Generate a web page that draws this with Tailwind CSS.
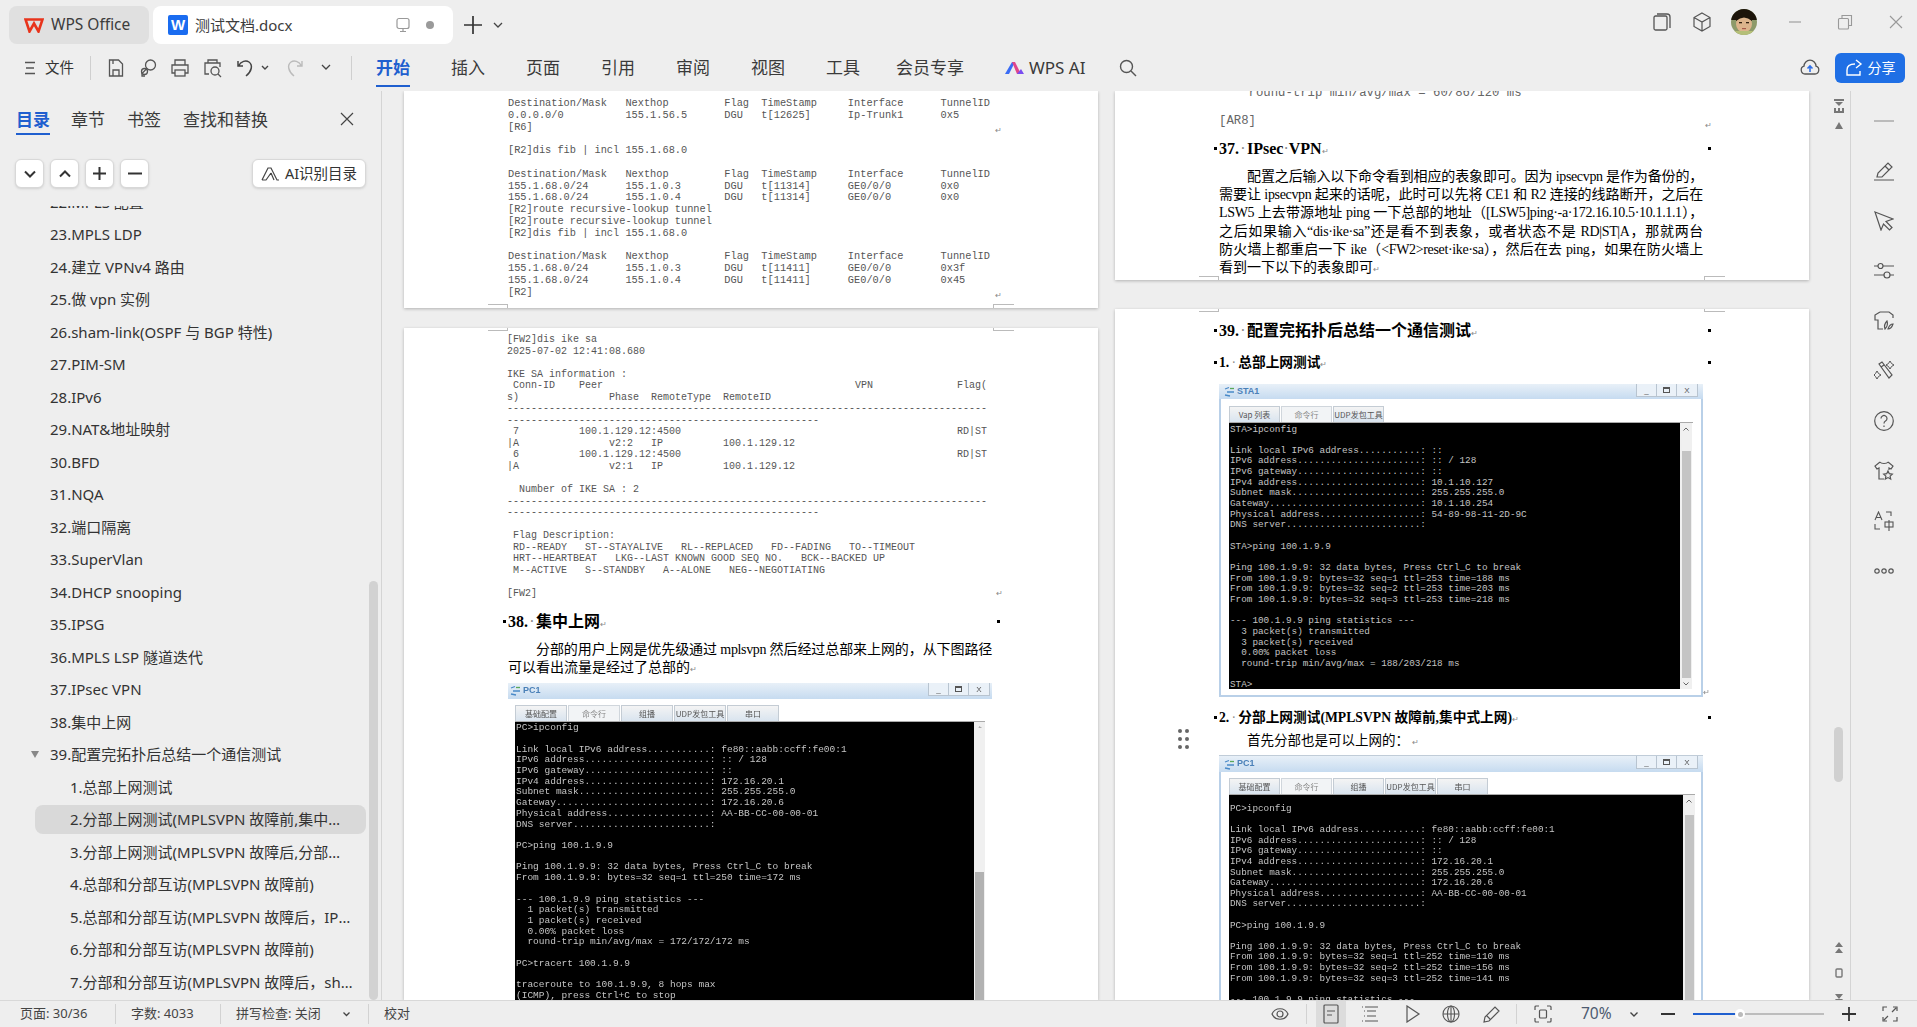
<!DOCTYPE html>
<html lang="zh">
<head>
<meta charset="UTF-8">
<title>测试文档.docx</title>
<script src="https://cdn.jsdelivr.net/npm/@tailwindcss/browser@4"></script>
</head>
<body class="h-screen w-screen overflow-hidden bg-[#eeeeee] text-[#333] font-['Noto_Sans','Noto_Sans_CJK_SC',sans-serif]">
<div class="flex h-[1027px] w-[1917px] flex-col">

  <!-- title bar -->
  <div class="flex h-[44px] shrink-0 items-end pr-[13px]">
    <div class="ml-[9px] flex h-[38px] w-[140px] items-center rounded-lg bg-[#e0e0e0] pl-[15px]">
      <svg class="h-[15px] w-[20px]" viewBox="0 0 20 15" fill="none" stroke="#e8341c" stroke-width="2.6" stroke-linejoin="miter"><path d="M1.5 1.5h17l-4 12-4.5-8-4.5 8z"/></svg>
      <span class="ml-[7px] whitespace-nowrap text-[15.500px] text-[#3c3c3c]">WPS Office</span>
    </div>
    <div class="ml-[4px] flex h-[38px] w-[300px] items-center rounded-t-lg rounded-b-lg bg-white pl-[15px]">
      <span class="flex h-[20px] w-[20px] items-center justify-center rounded-[2px] bg-[#1a6cf0] font-['Liberation_Sans'] text-[15px] font-bold text-white">W</span>
      <span class="ml-[7px] text-[15px] text-[#3c3c3c]">测试文档.docx</span>
      <svg class="ml-[103px] h-[16px] w-[16px]" viewBox="0 0 16 16" fill="none" stroke="#999" stroke-width="1.2"><rect x="2" y="1.5" width="12" height="10" rx="2"/><path d="M8 11.5v3M5 14.5h6"/></svg>
      <span class="ml-[15px] h-[8px] w-[8px] rounded-full bg-[#9a9a9a]"></span>
    </div>
    <div class="mb-[10px] ml-[11px] flex items-center">
      <svg class="h-[18px] w-[18px]" viewBox="0 0 18 18" stroke="#333" stroke-width="1.7"><path d="M9 0v18M0 9h18"/></svg>
      <svg class="ml-[11px] h-[8px] w-[10px]" viewBox="0 0 10 8" fill="none" stroke="#444" stroke-width="1.3"><path d="M1 2l4 4 4-4"/></svg>
    </div>
    <div class="flex-1"></div>
    <div class="mb-[9px] flex items-center">
      <svg class="h-[20px] w-[20px]" viewBox="0 0 20 20" fill="none" stroke="#555" stroke-width="1.3"><rect x="2" y="4" width="13" height="14" rx="1.5"/><path d="M5 2h10a3 3 0 0 1 3 3v11"/></svg>
      <svg class="ml-[20px] h-[20px] w-[20px]" viewBox="0 0 20 20" fill="none" stroke="#555" stroke-width="1.2"><path d="M10 1l8 4.5v9L10 19l-8-4.500v-9zM2 5.500l8 4.500 8-4.500M10 10v9"/></svg>
      <svg class="ml-[19px] h-[26px] w-[26px]" viewBox="0 0 26 26"><defs><clipPath id="av"><ellipse cx="13" cy="13" rx="13" ry="13"/></clipPath></defs><g clip-path="url(#av)"><rect width="26" height="26" fill="#8d9a6a"/><rect width="26" height="11" fill="#1c140a"/><ellipse cx="13" cy="15" rx="8" ry="8.500" fill="#dcb48c"/><path d="M5 12q8-7 16 0v-6H5z" fill="#1c140a"/><rect x="8" y="13" width="3" height="1.300" fill="#30200f"/><rect x="15" y="13" width="3" height="1.300" fill="#30200f"/><rect x="11" y="19" width="4" height="1.200" fill="#a85a4a"/><rect y="22" width="26" height="4" fill="#b5bf78"/></g></svg>
      <svg class="ml-[30px] h-[16px] w-[16px]" viewBox="0 0 16 16" stroke="#999" stroke-width="1.100"><path d="M2 8h12"/></svg>
      <svg class="ml-[34px] h-[16px] w-[16px]" viewBox="0 0 16 16" fill="none" stroke="#999" stroke-width="1.100"><rect x="1.500" y="4.500" width="10" height="10.500" rx="1"/><path d="M5 4.500V1.500h9.500v10h-3"/></svg>
      <svg class="ml-[35px] h-[16px] w-[16px]" viewBox="0 0 16 16" stroke="#999" stroke-width="1.100"><path d="M2 2l12 12M14 2L2 14"/></svg>
    </div>
  </div>

  <!-- ribbon -->
  <div class="flex h-[47px] shrink-0 items-center pr-[12px]">
    <svg class="ml-[25px] h-[14px] w-[10px]" viewBox="0 0 10 14" stroke="#555" stroke-width="1.300"><path d="M0 1.500h10M1 7h8M0 12.500h10"/></svg>
    <span class="ml-[10px] w-[30px] text-[14.500px] text-[#333]">文件</span>
    <span class="ml-[15px] h-[24px] w-px bg-[#cfcfcf]"></span>
    <svg class="ml-[15px] h-[20px] w-[20px]" viewBox="0 0 20 20" fill="none" stroke="#555" stroke-width="1.300"><path d="M3.500 2h9l4 4v12h-13zM7 18v-6h6v6M7 2v4"/></svg>
    <svg class="ml-[12px] h-[20px] w-[20px]" viewBox="0 0 20 20" fill="none" stroke="#555" stroke-width="1.300"><circle cx="12.500" cy="7" r="5"/><path d="M8.800 10.500L4 15.500v2.500h3"/><circle cx="6.500" cy="13.500" r="3" /></svg>
    <svg class="ml-[12px] h-[20px] w-[20px]" viewBox="0 0 20 20" fill="none" stroke="#555" stroke-width="1.300"><path d="M5 7V2h10v5M5 15H2V7h16v8h-3"/><rect x="5" y="12" width="10" height="6"/></svg>
    <svg class="ml-[13px] h-[20px] w-[20px]" viewBox="0 0 20 20" fill="none" stroke="#555" stroke-width="1.300"><path d="M5 5V2h9v3M6 16H2V5h15v4"/><circle cx="12" cy="13" r="4"/><path d="M15 16l3 3"/></svg>
    <svg class="ml-[13px] h-[20px] w-[20px]" viewBox="0 0 20 20" fill="none" stroke="#444" stroke-width="1.500"><path d="M2 3v5h5M2.500 8C5 3 10 2 13 4c4 3 3 9-3 14"/></svg>
    <svg class="ml-[5px] h-[6px] w-[8px]" viewBox="0 0 8 6" fill="none" stroke="#444" stroke-width="1.400"><path d="M1 1l3 3 3-3"/></svg>
    <svg class="ml-[15px] h-[20px] w-[20px]" viewBox="0 0 20 20" fill="none" stroke="#bbb" stroke-width="1.400"><path d="M18 3v5h-5M17.500 8C15 3 10 2 7 4c-4 3-3 9 3 14"/></svg>
    <svg class="ml-[17px] h-[7px] w-[10px]" viewBox="0 0 10 7" fill="none" stroke="#444" stroke-width="1.300"><path d="M1 1l4 4 4-4"/></svg>
    <span class="ml-[20px] h-[24px] w-px bg-[#cfcfcf]"></span>
    <div class="ml-[24px] flex h-full items-center gap-[41px] pt-[1px] text-[17px] text-[#3a3a3a]">
      <span class="relative font-bold text-[#1f5fcf]">开始<span class="absolute -bottom-[6px] left-0 h-[2px] w-full bg-[#1f5fcf]"></span></span>
      <span>插入</span><span>页面</span><span>引用</span><span>审阅</span><span>视图</span><span>工具</span><span class="-ml-[5px]">会员专享</span>
      <span class="flex items-center">
        <svg class="h-[14px] w-[19px]" viewBox="0 0 19 14"><path d="M0 13L7 1h3L4 13z" fill="#3a6cf5"/><path d="M7 1h3l6 12h-4z" fill="#e0468c"/><path d="M12 13l4-5 3 5z" fill="#7a4df0"/></svg>
        <span class="ml-[5px] whitespace-nowrap">WPS AI</span>
      </span>
    </div>
    <svg class="ml-[34px] h-[18px] w-[18px]" viewBox="0 0 18 18" fill="none" stroke="#555" stroke-width="1.400"><circle cx="7.500" cy="7.500" r="6"/><path d="M12 12l5 5"/></svg>
    <div class="flex-1"></div>
    <svg class="h-[20px] w-[20px]" viewBox="0 0 20 20" fill="none" stroke="#555" stroke-width="1.300"><path d="M5 16a4 4 0 0 1-1-7.800 6 6 0 0 1 12 0A4 4 0 0 1 15 16z"/><path d="M10 14V8M7.500 10.500L10 8l2.500 2.500" stroke="#2f6fe8" stroke-width="1.600"/></svg>
    <button class="ml-[15px] flex h-[30px] w-[70px] items-center justify-center gap-[5px] rounded-md bg-[#1f6fe5] text-[14px] text-white">
      <svg class="h-[18px] w-[18px]" viewBox="0 0 18 18" fill="none" stroke="#fff" stroke-width="1.400"><path d="M10 5c-5 0-8 2-8 6v5h13v-4M11 1l5 4-5 4"/></svg>分享
    </button>
  </div>

  <!-- body -->
  <div class="flex min-h-0 flex-1">

    <!-- outline panel -->
    <aside class="relative flex w-[382px] shrink-0 flex-col border-r border-[#d4d4d4]">
      <div class="flex h-[45px] shrink-0 pl-[16px] pt-[17px] text-[17px] text-[#3a3a3a]">
        <span class="relative h-[26px] w-[34px] font-bold leading-[24px] text-[#1f5fcf]">目录<span class="absolute bottom-[-1px] left-0 h-[2px] w-full bg-[#1f5fcf]"></span></span>
        <span class="ml-[21px] leading-[24px]">章节</span>
        <span class="ml-[22px] leading-[24px]">书签</span>
        <span class="ml-[22px] leading-[24px]">查找和替换</span>
        <svg class="ml-[72px] mt-[4px] h-[14px] w-[14px]" viewBox="0 0 14 14" stroke="#444" stroke-width="1.200"><path d="M1 1l12 12M13 1L1 13"/></svg>
      </div>
      <div class="mt-[23px] flex h-[29px] shrink-0 pl-[15px]">
        <button class="flex h-[29px] w-[29px] items-center justify-center rounded-md border border-[#d8d8d8] bg-white shadow-sm"><svg class="h-[8px] w-[12px]" viewBox="0 0 12 8" fill="none" stroke="#333" stroke-width="2"><path d="M1 1.500l5 5 5-5"/></svg></button>
        <button class="ml-[6px] flex h-[29px] w-[29px] items-center justify-center rounded-md border border-[#d8d8d8] bg-white shadow-sm"><svg class="h-[8px] w-[12px]" viewBox="0 0 12 8" fill="none" stroke="#333" stroke-width="2"><path d="M1 6.500l5-5 5 5"/></svg></button>
        <button class="ml-[6px] flex h-[29px] w-[29px] items-center justify-center rounded-md border border-[#d8d8d8] bg-white shadow-sm"><svg class="h-[13px] w-[13px]" viewBox="0 0 13 13" stroke="#333" stroke-width="2"><path d="M6.500 0v13M0 6.500h13"/></svg></button>
        <button class="ml-[6px] flex h-[29px] w-[29px] items-center justify-center rounded-md border border-[#d8d8d8] bg-white shadow-sm"><svg class="h-[13px] w-[14px]" viewBox="0 0 14 13" stroke="#333" stroke-width="2"><path d="M0 6.500h14"/></svg></button>
        <button class="ml-[103px] flex h-[29px] w-[114px] items-center justify-center gap-[5px] rounded-md border border-[#d8d8d8] bg-white text-[14.500px] text-[#333] shadow-sm">
          <svg class="h-[14px] w-[19px]" viewBox="0 0 19 14" fill="none" stroke="#444" stroke-width="1.200"><path d="M1 13L7 1h3l6 12h2M1 13h4l5-7M10 6l3 7"/></svg>AI识别目录
        </button>
      </div>
      <div class="mt-[18px] min-h-0 flex-1 overflow-hidden text-[15px] text-[#333]">
        <div class="-mt-[20.250px]">
          <div class="flex h-[32.500px] items-center pl-[50px]">22.MPLS 配置</div>
          <div class="flex h-[32.500px] items-center pl-[50px]">23.MPLS LDP</div>
          <div class="flex h-[32.500px] items-center pl-[50px]">24.建立 VPNv4 路由</div>
          <div class="flex h-[32.500px] items-center pl-[50px]">25.做 vpn 实例</div>
          <div class="flex h-[32.500px] items-center pl-[50px]">26.sham-link(OSPF 与 BGP 特性)</div>
          <div class="flex h-[32.500px] items-center pl-[50px]">27.PIM-SM</div>
          <div class="flex h-[32.500px] items-center pl-[50px]">28.IPv6</div>
          <div class="flex h-[32.500px] items-center pl-[50px]">29.NAT&amp;地址映射</div>
          <div class="flex h-[32.500px] items-center pl-[50px]">30.BFD</div>
          <div class="flex h-[32.500px] items-center pl-[50px]">31.NQA</div>
          <div class="flex h-[32.500px] items-center pl-[50px]">32.端口隔离</div>
          <div class="flex h-[32.500px] items-center pl-[50px]">33.SuperVlan</div>
          <div class="flex h-[32.500px] items-center pl-[50px]">34.DHCP snooping</div>
          <div class="flex h-[32.500px] items-center pl-[50px]">35.IPSG</div>
          <div class="flex h-[32.500px] items-center pl-[50px]">36.MPLS LSP 隧道迭代</div>
          <div class="flex h-[32.500px] items-center pl-[50px]">37.IPsec VPN</div>
          <div class="flex h-[32.500px] items-center pl-[50px]">38.集中上网</div>
          <div class="flex h-[32.500px] items-center pl-[31px]"><svg class="mr-[11px] h-[7px] w-[8px]" viewBox="0 0 8 7" fill="#888"><path d="M0 0h8L4 7z"/></svg>39.配置完拓扑后总结一个通信测试</div>
          <div class="flex h-[32.500px] items-center pl-[70px]">1.总部上网测试</div>
          <div class="flex h-[32.500px] items-center pl-[35px] pr-[15px]"><div class="flex h-[29px] w-full items-center rounded-lg bg-[#d9d9d9] pl-[35px]"><span class="block w-[282px] truncate">2.分部上网测试(MPLSVPN 故障前,集中式上网)</span></div></div>
          <div class="flex h-[32.500px] items-center pl-[70px]"><span class="block w-[282px] truncate">3.分部上网测试(MPLSVPN 故障后,分部上网)</span></div>
          <div class="flex h-[32.500px] items-center pl-[70px]">4.总部和分部互访(MPLSVPN 故障前)</div>
          <div class="flex h-[32.500px] items-center pl-[70px]"><span class="block w-[284px] truncate">5.总部和分部互访(MPLSVPN 故障后，IPsec VPN)</span></div>
          <div class="flex h-[32.500px] items-center pl-[70px]">6.分部和分部互访(MPLSVPN 故障前)</div>
          <div class="flex h-[32.500px] items-center pl-[70px]"><span class="block w-[290px] truncate">7.分部和分部互访(MPLSVPN 故障后，sham-link)</span></div>
        </div>
      </div>
      <div class="absolute bottom-0 right-[3px] top-[490px] w-[9px] rounded-full bg-[#d2d2d2]"></div>
    </aside>

    <!-- document -->
    <main class="relative flex min-w-0 flex-1 gap-[17px] overflow-hidden pl-[22px] font-['Liberation_Serif','Noto_Sans_CJK_SC',serif] text-black">

      <!-- left column -->
      <div class="flex w-[694px] shrink-0 flex-col gap-[20px]">
        <section class="relative h-[217px] shrink-0 bg-white pl-[104px] pt-[7px] shadow-[0_1px_3px_rgba(0,0,0,0.25)]">
<pre class="font-['Liberation_Mono'] text-[10.300px] leading-[11.800px] text-[#555]">Destination/Mask   Nexthop         Flag  TimeStamp     Interface      TunnelID
0.0.0.0/0          155.1.56.5      DGU   t[12625]      Ip-Trunk1      0x5
[R6]

[R2]dis fib | incl 155.1.68.0

Destination/Mask   Nexthop         Flag  TimeStamp     Interface      TunnelID
155.1.68.0/24      155.1.0.3       DGU   t[11314]      GE0/0/0        0x0
155.1.68.0/24      155.1.0.4       DGU   t[11314]      GE0/0/0        0x0
[R2]route recursive-lookup tunnel
[R2]route recursive-lookup tunnel
[R2]dis fib | incl 155.1.68.0

Destination/Mask   Nexthop         Flag  TimeStamp     Interface      TunnelID
155.1.68.0/24      155.1.0.3       DGU   t[11411]      GE0/0/0        0x3f
155.1.68.0/24      155.1.0.4       DGU   t[11411]      GE0/0/0        0x45
[R2]</pre>
          <span class="absolute left-[591px] top-[34px] font-['Liberation_Sans'] text-[8px] text-[#888]">↵</span>
          <span class="absolute left-[591px] top-[199px] font-['Liberation_Sans'] text-[8px] text-[#888]">↵</span>
          <span class="absolute bottom-0 left-[84px] h-[4px] w-[20px] border-r border-t border-[#bbb]"></span>
          <span class="absolute bottom-0 left-[589px] h-[4px] w-[21px] border-l border-t border-[#bbb]"></span>
        </section>
        <section class="relative min-h-0 flex-1 overflow-hidden bg-white pl-[104px] pr-[106px] pt-[6px] shadow-[0_1px_3px_rgba(0,0,0,0.25)]">
          <span class="absolute left-[84px] top-0 h-[3px] w-[20px] border-b border-r border-[#bbb]"></span>
          <span class="absolute left-[589px] top-0 h-[3px] w-[21px] border-b border-l border-[#bbb]"></span>
<pre class="-ml-px font-['Liberation_Mono'] text-[10px] leading-[11.550px] text-[#555]">[FW2]dis ike sa
2025-07-02 12:41:08.680

IKE SA information :
 Conn-ID    Peer                                          VPN              Flag(
s)               Phase  RemoteType  RemoteID
--------------------------------------------------------------------------------
----------------------------------------------------
 7          100.1.129.12:4500                                              RD|ST
|A               v2:2   IP          100.1.129.12
 6          100.1.129.12:4500                                              RD|ST
|A               v2:1   IP          100.1.129.12

  Number of IKE SA : 2
--------------------------------------------------------------------------------
----------------------------------------------------

 Flag Description:
 RD--READY   ST--STAYALIVE   RL--REPLACED   FD--FADING   TO--TIMEOUT
 HRT--HEARTBEAT   LKG--LAST KNOWN GOOD SEQ NO.   BCK--BACKED UP
 M--ACTIVE   S--STANDBY   A--ALONE   NEG--NEGOTIATING

[FW2]</pre>
          <span class="absolute left-[592px] top-[260px] font-['Liberation_Sans'] text-[8px] text-[#888]">↵</span>
          <div class="relative mt-[11px] h-[22px] text-[16px] font-bold leading-[22px]">
            <span class="absolute -left-[5px] top-[9px] h-[3px] w-[3px] bg-black"></span>
            <span class="absolute left-[489px] top-[9px] h-[3px] w-[3px] bg-black"></span>
            38.<span class="inline-block w-[8px] text-center font-normal text-[#888]">·</span>集中上网<span class="font-['Liberation_Sans'] text-[8px] font-normal text-[#888]">↵</span>
          </div>
          <div class="mt-[8px] text-[14px] leading-[18px]">
            <div class="pl-[28px] tracking-[-0.350px] [text-align-last:justify]">分部的用户上网是优先级通过 mplsvpn 然后经过总部来上网的，从下图路径</div>
            <div>可以看出流量是经过了总部的<span class="font-['Liberation_Sans'] text-[8px] text-[#888]">↵</span></div>
          </div>
          <div class="mt-[4px] blur-[0.3px]">
            <div class="flex h-[16px] items-center bg-gradient-to-b from-[#e8f0f8] to-[#c6dbf0] pl-[2px] pr-[2px]">
              <svg class="h-[11px] w-[11px]" viewBox="0 0 11 11" fill="none" stroke-width="1.300"><path d="M1 3l4-1.500M3 6h7M1 9l5 1" stroke="#4a8ac8"/><path d="M6 2.500h4" stroke="#5aa85a"/></svg>
              <span class="ml-[2px] font-['Liberation_Sans'] text-[9px] font-bold text-[#4a80b8]">PC1</span>
              <div class="ml-auto flex h-[13px] self-start border-x border-b border-[#b8c4d0] bg-[#eaf1f8] font-['Liberation_Sans'] text-[8px] leading-[13px] text-[#555]">
                <span class="w-[20px] border-r border-[#b8c4d0] text-center">_</span><span class="flex w-[20px] items-center justify-center border-r border-[#b8c4d0]"><span class="h-[6px] w-[7px] border border-t-2 border-[#555]"></span></span><span class="w-[20px] text-center">X</span>
              </div>
            </div>
            <div class="bg-white pl-[7px] pr-[7px] pt-[6px]">
              <div class="flex h-[16px] gap-[1px] font-['Noto_Sans_CJK_SC'] text-[8px] leading-[16px] text-[#555]">
                <span class="w-[52px] border border-b-0 border-[#c4ccd4] bg-gradient-to-b from-[#f4f4f4] to-[#d9e4ef] text-center">基础配置</span>
                <span class="w-[52px] border border-b-0 border-[#d0d6dc] bg-[#f2f4f6] text-center text-[#888]">命令行</span>
                <span class="w-[52px] border border-b-0 border-[#c4ccd4] bg-gradient-to-b from-[#f4f4f4] to-[#d9e4ef] text-center">组播</span>
                <span class="w-[52px] whitespace-nowrap border border-b-0 border-[#c4ccd4] bg-gradient-to-b from-[#f4f4f4] to-[#d9e4ef] text-center">UDP发包工具</span>
                <span class="w-[52px] border border-b-0 border-[#c4ccd4] bg-gradient-to-b from-[#f4f4f4] to-[#d9e4ef] text-center">串口</span>
              </div>
              <div class="flex h-[290px] border-t border-[#aaa]">
                <div class="w-[459px] bg-black pl-[1px] pt-[1.500px]">
<pre class="font-['Liberation_Mono'] text-[9.500px] leading-[10.720px] text-[#c4c4c4]">PC>ipconfig

Link local IPv6 address...........: fe80::aabb:ccff:fe00:1
IPv6 address......................: :: / 128
IPv6 gateway......................: ::
IPv4 address......................: 172.16.20.1
Subnet mask.......................: 255.255.255.0
Gateway...........................: 172.16.20.6
Physical address..................: AA-BB-CC-00-00-01
DNS server........................:

PC>ping 100.1.9.9

Ping 100.1.9.9: 32 data bytes, Press Ctrl_C to break
From 100.1.9.9: bytes=32 seq=1 ttl=250 time=172 ms

--- 100.1.9.9 ping statistics ---
  1 packet(s) transmitted
  1 packet(s) received
  0.00% packet loss
  round-trip min/avg/max = 172/172/172 ms

PC>tracert 100.1.9.9

traceroute to 100.1.9.9, 8 hops max
(ICMP), press Ctrl+C to stop</pre>
                </div>
                <div class="flex w-[11px] flex-col items-center bg-[#f0f0f0]">
                  <svg class="mt-[4px] h-[4px] w-[6px]" viewBox="0 0 6 4" fill="none" stroke="#666"><path d="M0.500 3.500L3 1l2.500 2.500"/></svg>
                  <div class="mt-[144px] h-[200px] w-[9px] bg-[#b2b2b2]"></div>
                </div>
              </div>
            </div>
          </div>
        </section>
      </div>

      <!-- right column -->
      <div class="flex w-[694px] shrink-0 flex-col gap-[29px]">
        <section class="relative h-[189px] shrink-0 overflow-hidden bg-white pl-[104px] pr-[106px] shadow-[0_1px_3px_rgba(0,0,0,0.25)]">
<pre class="-mt-[5px] font-['Liberation_Mono'] text-[12.300px] leading-[14px] text-[#666]">    round-trip min/avg/max = 60/86/120 ms

[AR8]</pre>
          <span class="absolute left-[590px] top-[29px] font-['Liberation_Sans'] text-[8px] text-[#888]">↵</span>
          <div class="relative mt-[10px] h-[22px] text-[16px] font-bold leading-[22px]">
            <span class="absolute -left-[5px] top-[9px] h-[3px] w-[3px] bg-black"></span>
            <span class="absolute left-[489px] top-[9px] h-[3px] w-[3px] bg-black"></span>
            37.<span class="inline-block w-[8px] text-center font-normal text-[#888]">·</span>IPsec<span class="font-normal text-[#888]">·</span>VPN<span class="font-['Liberation_Sans'] text-[8px] font-normal text-[#888]">↵</span>
          </div>
          <div class="mt-[8px] text-[14px] leading-[18.200px] tracking-[-0.350px]">
            <div class="pl-[28px] [text-align-last:justify]">配置之后输入以下命令看到相应的表象即可。因为 ipsecvpn 是作为备份的，</div>
            <div class="[text-align-last:justify]">需要让 ipsecvpn 起来的话呢，此时可以先将 CE1 和 R2 连接的线路断开，之后在</div>
            <div class="[text-align-last:justify]">LSW5 上去带源地址 ping 一下总部的地址（[LSW5]ping·-a·172.16.10.5·10.1.1.1），</div>
            <div class="[text-align-last:justify]">之后如果输入“dis·ike·sa”还是看不到表象，或者状态不是 RD|ST|A，那就两台</div>
            <div class="[text-align-last:justify]">防火墙上都重启一下 ike（&lt;FW2&gt;reset·ike·sa），然后在去 ping，如果在防火墙上</div>
            <div class="tracking-normal">看到一下以下的表象即可<span class="font-['Liberation_Sans'] text-[8px] text-[#888]">↵</span></div>
          </div>
          <span class="absolute bottom-0 left-[84px] h-[4px] w-[20px] border-r border-t border-[#bbb]"></span>
          <span class="absolute bottom-0 left-[589px] h-[4px] w-[21px] border-l border-t border-[#bbb]"></span>
        </section>
        <section class="relative min-h-0 flex-1 overflow-hidden bg-white pl-[104px] pr-[106px] pt-[11px] shadow-[0_1px_3px_rgba(0,0,0,0.25)]">
          <span class="absolute left-[84px] top-0 h-[3px] w-[20px] border-b border-r border-[#bbb]"></span>
          <span class="absolute left-[589px] top-0 h-[3px] w-[21px] border-b border-l border-[#bbb]"></span>
          <div class="relative h-[22px] text-[16px] font-bold leading-[22px]">
            <span class="absolute -left-[5px] top-[9px] h-[3px] w-[3px] bg-black"></span>
            <span class="absolute left-[489px] top-[9px] h-[3px] w-[3px] bg-black"></span>
            39.<span class="inline-block w-[8px] text-center font-normal text-[#888]">·</span>配置完拓扑后总结一个通信测试<span class="font-['Liberation_Sans'] text-[8px] font-normal text-[#888]">↵</span>
          </div>
          <div class="relative mt-[11px] h-[20px] text-[13.700px] font-bold leading-[20px]">
            <span class="absolute -left-[5px] top-[8px] h-[3px] w-[3px] bg-black"></span>
            <span class="absolute left-[489px] top-[8px] h-[3px] w-[3px] bg-black"></span>
            1.<span class="inline-block w-[9px] text-center font-normal text-[#888]">·</span>总部上网测试<span class="font-['Liberation_Sans'] text-[8px] font-normal text-[#888]">↵</span>
          </div>

          <!-- STA1 window -->
          <div class="relative mt-[11px] h-[313px] w-[484px] blur-[0.3px]">
            <div class="flex h-[15px] items-center bg-gradient-to-b from-[#e8f0f8] to-[#c6dbf0] pl-[5px] pr-[5px]">
              <svg class="h-[11px] w-[11px]" viewBox="0 0 11 11" fill="none" stroke-width="1.300"><path d="M1 3l4-1.500M3 6h7M1 9l5 1" stroke="#4a8ac8"/><path d="M6 2.500h4" stroke="#5aa85a"/></svg>
              <span class="ml-[2px] font-['Liberation_Sans'] text-[9px] font-bold text-[#4a80b8]">STA1</span>
              <div class="ml-auto flex h-[13px] self-start border-x border-b border-[#b8c4d0] bg-[#eaf1f8] font-['Liberation_Sans'] text-[8px] leading-[13px] text-[#555]">
                <span class="w-[20px] border-r border-[#b8c4d0] text-center">_</span><span class="flex w-[20px] items-center justify-center border-r border-[#b8c4d0]"><span class="h-[6px] w-[7px] border border-t-2 border-[#555]"></span></span><span class="w-[20px] text-center">X</span>
              </div>
            </div>
            <div class="h-[298px] border-x-2 border-b-2 border-[#b9d0e8] bg-white pl-[8px] pr-[8px] pt-[7px]">
              <div class="flex h-[16px] gap-[1px] font-['Noto_Sans_CJK_SC'] text-[8px] leading-[16px] text-[#555]">
                <span class="w-[51px] border border-b-0 border-[#c4ccd4] bg-gradient-to-b from-[#f4f4f4] to-[#d9e4ef] text-center">Vap 列表</span>
                <span class="w-[51px] border border-b-0 border-[#d0d6dc] bg-[#f2f4f6] text-center text-[#888]">命令行</span>
                <span class="w-[51px] whitespace-nowrap border border-b-0 border-[#c4ccd4] bg-gradient-to-b from-[#f4f4f4] to-[#d9e4ef] text-center">UDP发包工具</span>
              </div>
              <div class="flex h-[267px] border-t border-[#aaa]">
                <div class="w-[451px] bg-black pl-[1px] pt-[1.500px]">
<pre class="font-['Liberation_Mono'] text-[9.330px] leading-[10.650px] text-[#c4c4c4]">STA>ipconfig

Link local IPv6 address...........: ::
IPv6 address......................: :: / 128
IPv6 gateway......................: ::
IPv4 address......................: 10.1.10.127
Subnet mask.......................: 255.255.255.0
Gateway...........................: 10.1.10.254
Physical address..................: 54-89-98-11-2D-9C
DNS server........................:

STA>ping 100.1.9.9

Ping 100.1.9.9: 32 data bytes, Press Ctrl_C to break
From 100.1.9.9: bytes=32 seq=1 ttl=253 time=188 ms
From 100.1.9.9: bytes=32 seq=2 ttl=253 time=203 ms
From 100.1.9.9: bytes=32 seq=3 ttl=253 time=218 ms

--- 100.1.9.9 ping statistics ---
  3 packet(s) transmitted
  3 packet(s) received
  0.00% packet loss
  round-trip min/avg/max = 188/203/218 ms

STA></pre>
                </div>
                <div class="flex w-[12px] flex-col items-center bg-[#f0f0f0]">
                  <svg class="mt-[4px] h-[4px] w-[6px]" viewBox="0 0 6 4" fill="none" stroke="#666"><path d="M0.500 3.500L3 1l2.500 2.500"/></svg>
                  <div class="mt-[20px] h-[227px] w-[9px] bg-[#c4c4c4]"></div>
                  <svg class="mt-[4px] h-[4px] w-[6px]" viewBox="0 0 6 4" fill="none" stroke="#666"><path d="M0.500 0.500L3 3l2.500-2.500"/></svg>
                </div>
              </div>
            </div>
            <span class="absolute -right-[7px] bottom-0 font-['Liberation_Sans'] text-[8px] leading-[8px] text-[#888]">↵</span>
          </div>

          <div class="relative mt-[11px] h-[20px] text-[13.700px] font-bold leading-[20px]">
            <span class="absolute -left-[5px] top-[8px] h-[3px] w-[3px] bg-black"></span>
            <span class="absolute left-[489px] top-[8px] h-[3px] w-[3px] bg-black"></span>
            2.<span class="inline-block w-[9px] text-center font-normal text-[#888]">·</span>分部上网测试(MPLSVPN 故障前,集中式上网)<span class="font-['Liberation_Sans'] text-[8px] font-normal text-[#888]">↵</span>
          </div>
          <div class="mt-[4px] pl-[28px] text-[13.500px] leading-[18px]">首先分部也是可以上网的： <span class="font-['Liberation_Sans'] text-[8px] text-[#888]">↵</span></div>

          <!-- PC1 window -->
          <div class="relative mt-[3px] w-[484px] blur-[0.3px]">
            <div class="flex h-[17px] items-center border-t border-[#c0ccd8] bg-gradient-to-b from-[#e8f0f8] to-[#c6dbf0] pl-[5px] pr-[5px]">
              <svg class="h-[11px] w-[11px]" viewBox="0 0 11 11" fill="none" stroke-width="1.300"><path d="M1 3l4-1.500M3 6h7M1 9l5 1" stroke="#4a8ac8"/><path d="M6 2.500h4" stroke="#5aa85a"/></svg>
              <span class="ml-[2px] font-['Liberation_Sans'] text-[9px] font-bold text-[#4a80b8]">PC1</span>
              <div class="ml-auto flex h-[13px] self-start border-x border-b border-[#b8c4d0] bg-[#eaf1f8] font-['Liberation_Sans'] text-[8px] leading-[13px] text-[#555]">
                <span class="w-[20px] border-r border-[#b8c4d0] text-center">_</span><span class="flex w-[20px] items-center justify-center border-r border-[#b8c4d0]"><span class="h-[6px] w-[7px] border border-t-2 border-[#555]"></span></span><span class="w-[20px] text-center">X</span>
              </div>
            </div>
            <div class="border-x-2 border-[#b9d0e8] bg-white pl-[8px] pr-[6px] pt-[6px]">
              <div class="flex h-[16px] gap-[1px] font-['Noto_Sans_CJK_SC'] text-[8px] leading-[16px] text-[#555]">
                <span class="w-[51px] border border-b-0 border-[#c4ccd4] bg-gradient-to-b from-[#f4f4f4] to-[#d9e4ef] text-center">基础配置</span>
                <span class="w-[51px] border border-b-0 border-[#d0d6dc] bg-[#f2f4f6] text-center text-[#888]">命令行</span>
                <span class="w-[51px] border border-b-0 border-[#c4ccd4] bg-gradient-to-b from-[#f4f4f4] to-[#d9e4ef] text-center">组播</span>
                <span class="w-[51px] whitespace-nowrap border border-b-0 border-[#c4ccd4] bg-gradient-to-b from-[#f4f4f4] to-[#d9e4ef] text-center">UDP发包工具</span>
                <span class="w-[51px] border border-b-0 border-[#c4ccd4] bg-gradient-to-b from-[#f4f4f4] to-[#d9e4ef] text-center">串口</span>
              </div>
              <div class="flex h-[240px] border-t border-[#aaa]">
                <div class="w-[454px] bg-black pl-[1px] pt-[9px]">
<pre class="font-['Liberation_Mono'] text-[9.330px] leading-[10.600px] text-[#c4c4c4]">PC>ipconfig

Link local IPv6 address...........: fe80::aabb:ccff:fe00:1
IPv6 address......................: :: / 128
IPv6 gateway......................: ::
IPv4 address......................: 172.16.20.1
Subnet mask.......................: 255.255.255.0
Gateway...........................: 172.16.20.6
Physical address..................: AA-BB-CC-00-00-01
DNS server........................:

PC>ping 100.1.9.9

Ping 100.1.9.9: 32 data bytes, Press Ctrl_C to break
From 100.1.9.9: bytes=32 seq=1 ttl=252 time=110 ms
From 100.1.9.9: bytes=32 seq=2 ttl=252 time=156 ms
From 100.1.9.9: bytes=32 seq=3 ttl=252 time=141 ms

--- 100.1.9.9 ping statistics ---</pre>
                </div>
                <div class="flex w-[12px] flex-col items-center bg-[#f0f0f0]">
                  <svg class="mt-[4px] h-[4px] w-[6px]" viewBox="0 0 6 4" fill="none" stroke="#666"><path d="M0.500 3.500L3 1l2.500 2.500"/></svg>
                  <div class="mt-[12px] h-[200px] w-[9px] bg-[#c4c4c4]"></div>
                </div>
              </div>
            </div>
          </div>
        </section>
      </div>

      <!-- paragraph drag handle, floats over the page margin -->
      <div class="absolute left-[796px] top-[638px] grid grid-cols-2 gap-x-[3px] gap-y-[4px]">
        <span class="h-[4px] w-[4px] rounded-full bg-[#666]"></span><span class="h-[4px] w-[4px] rounded-full bg-[#666]"></span>
        <span class="h-[4px] w-[4px] rounded-full bg-[#666]"></span><span class="h-[4px] w-[4px] rounded-full bg-[#666]"></span>
        <span class="h-[4px] w-[4px] rounded-full bg-[#666]"></span><span class="h-[4px] w-[4px] rounded-full bg-[#666]"></span>
      </div>

      <!-- doc scrollbar and page jump buttons -->
      <svg class="absolute left-[1451px] top-[8px] h-[14px] w-[12px]" viewBox="0 0 12 14" fill="#777"><path d="M1 0h10v2H1zM2 3h8L6 7z"/><rect x="1" y="9" width="2" height="4"/><rect x="5" y="9" width="2" height="4"/><rect x="9" y="9" width="2" height="4"/><rect x="1" y="12" width="10" height="2"/></svg>
      <svg class="absolute left-[1453px] top-[31px] h-[7px] w-[8px]" viewBox="0 0 8 7" fill="#777"><path d="M4 0l4 7H0z"/></svg>
      <div class="absolute left-[1452px] top-[636px] h-[55px] w-[9px] rounded-full bg-[#d0d0d0]"></div>
      <svg class="absolute left-[1453px] top-[851px] h-[12px] w-[8px]" viewBox="0 0 8 12" fill="#777"><path d="M4 0l4 5H0zM4 6l4 5H0z"/></svg>
      <svg class="absolute left-[1453px] top-[877px] h-[10px] w-[8px]" viewBox="0 0 8 10" fill="none" stroke="#777" stroke-width="1.400"><rect x="1" y="1" width="6" height="8" rx="1"/></svg>
      <svg class="absolute left-[1453px] top-[902px] h-[12px] w-[8px]" viewBox="0 0 8 12" fill="#777"><path d="M0 1h8L4 6zM0 6h8l-4 5z"/></svg>
    </main>

    <!-- right tool rail -->
    <aside class="flex w-[67px] shrink-0 flex-col items-center border-l border-[#d4d4d4] pt-[20px]">
      <svg class="h-[20px] w-[20px]" viewBox="0 0 20 20" stroke="#aaa" stroke-width="1.500"><path d="M0 10h20"/></svg>
      <svg class="mt-[30px] h-[20px] w-[20px]" viewBox="0 0 20 20" fill="none" stroke="#555" stroke-width="1.200"><path d="M0 19h20M3 16l1-4L14 2l4 4L8 16z"/><path d="M11 5l4 4"/></svg>
      <svg class="mt-[30px] h-[20px] w-[20px]" viewBox="0 0 20 20" fill="none" stroke="#555" stroke-width="1.200"><path d="M1 1l18 7-7 2.500 6 6-2.500 2.500-6-6L7 19z"/></svg>
      <svg class="mt-[30px] h-[20px] w-[20px]" viewBox="0 0 20 20" fill="none" stroke="#555" stroke-width="1.200"><path d="M0 5h4M9 5h11M0 14h10M16 14h4"/><circle cx="6.500" cy="5" r="2.500"/><circle cx="13" cy="14" r="3"/></svg>
      <svg class="mt-[30px] h-[20px] w-[20px]" viewBox="0 0 20 20" fill="none" stroke="#555" stroke-width="1.200"><path d="M6 1L1 4v5h3v9h5M6 1h9l4 3v3"/><path d="M11 18c-1-3 0-6 2-8 1 3 0 6-2 8zM14 18c1-3 3-5 5-5-1 3-2 5-5 5z"/></svg>
      <svg class="mt-[30px] h-[20px] w-[20px]" viewBox="0 0 20 20" fill="none" stroke="#555" stroke-width="1.200"><path d="M5 3l3-2 10 13-3 3zM7 6l3-2"/><path d="M16 0l1.500 2.500L20 4l-2.500 1.500L16 8l-1.500-2.500L12 4l2.500-1.500zM3 10l1.500 2.500L7 14l-2.500 1.500L3 18l-1.500-2.500L0 14l1.500-1.500z" stroke-width="1"/></svg>
      <svg class="mt-[30px] h-[20px] w-[20px]" viewBox="0 0 20 20" fill="none" stroke="#555" stroke-width="1.200"><circle cx="10" cy="10" r="9.300"/><path d="M7 7.500a3 3 0 1 1 4.500 2.600c-1 .6-1.500 1.200-1.500 2.400M10 14.500v1.500"/></svg>
      <svg class="mt-[30px] h-[20px] w-[20px]" viewBox="0 0 20 20" fill="none" stroke="#555" stroke-width="1.200"><path d="M6 1L1 5l2 3 2-1v11h5M14 1l5 4-2 3-2-1v2M6 1c1 2 7 2 8 0"/><path d="M14 10l1.300 2.700 3 .4-2.200 2 .6 3-2.700-1.500-2.700 1.500.6-3-2.200-2 3-.4z"/></svg>
      <svg class="mt-[30px] h-[20px] w-[20px]" viewBox="0 0 20 20" fill="none" stroke="#555" stroke-width="1.100"><path d="M1 9l3.500-8L8 9M2.300 6.500h4.400M12 1h5v4M1 13v5h5"/><rect x="11" y="11" width="8" height="5"/><path d="M15 9v11"/></svg>
      <svg class="mt-[30px] h-[20px] w-[20px]" viewBox="0 0 20 20" fill="none" stroke="#555" stroke-width="1.200"><circle cx="3" cy="10" r="2.200"/><circle cx="10" cy="10" r="2.200"/><circle cx="17" cy="10" r="2.200"/></svg>
    </aside>
  </div>

  <!-- status bar -->
  <div class="flex h-[27px] shrink-0 items-center border-t border-[#d8d8d8] pr-[19px] text-[13px] text-[#444]">
    <span class="ml-[20px] w-[80px] whitespace-nowrap">页面: 30/36</span>
    <span class="ml-[15px] h-[20px] w-px bg-[#d2d2d2]"></span>
    <span class="ml-[15px] w-[74px] whitespace-nowrap">字数: 4033</span>
    <span class="ml-[15px] h-[20px] w-px bg-[#d2d2d2]"></span>
    <span class="ml-[15px] w-[98px] whitespace-nowrap">拼写检查: 关闭</span>
    <svg class="ml-[9px] h-[5px] w-[7px]" viewBox="0 0 7 5" fill="none" stroke="#444" stroke-width="1.300"><path d="M.5.500L3.500 3.500 6.500.500"/></svg>
    <span class="ml-[18px] h-[20px] w-px bg-[#d2d2d2]"></span>
    <span class="ml-[15px] whitespace-nowrap">校对</span>
    <div class="flex-1"></div>
    <div class="flex h-full items-center">
      <svg class="h-[18px] w-[18px]" viewBox="0 0 18 18" fill="none" stroke="#555" stroke-width="1.200"><path d="M1 9c3-7 13-7 16 0-3 7-13 7-16 0z"/><circle cx="9" cy="9" r="3"/></svg>
      <span class="ml-[17px] h-[20px] w-px bg-[#d2d2d2]"></span>
      <div class="ml-[9px] flex h-full w-[30px] items-center justify-center bg-[#dcdcdc]"><svg class="h-[20px] w-[16px]" viewBox="0 0 16 20" fill="none" stroke="#555" stroke-width="1.200"><rect x="1" y="1" width="14" height="18" rx="1"/><path d="M4 7h8M4 11h5"/></svg></div>
      <svg class="ml-[16px] h-[16px] w-[16px]" viewBox="0 0 16 16" fill="none" stroke="#555" stroke-width="1.200"><path d="M3 1h13M0 1h1M5 5h9M2 5h1M5 10h9M2 10h1M3 15h13M0 15h1"/></svg>
      <svg class="ml-[27px] h-[18px] w-[16px]" viewBox="0 0 16 18" fill="none" stroke="#555" stroke-width="1.200"><path d="M2 1l12 8-12 8z"/></svg>
      <svg class="ml-[21px] h-[18px] w-[18px]" viewBox="0 0 18 18" fill="none" stroke="#555" stroke-width="1.100"><circle cx="9" cy="9" r="8"/><ellipse cx="9" cy="9" rx="3.500" ry="8"/><path d="M1 9h16M9 1v16"/></svg>
      <svg class="ml-[23px] h-[18px] w-[18px]" viewBox="0 0 18 18" fill="none" stroke="#555" stroke-width="1.200"><path d="M1 17l1-5L12 2l4 4L6 16zM4 11l3 3"/></svg>
      <span class="ml-[15px] h-[20px] w-px bg-[#d2d2d2]"></span>
      <svg class="ml-[17px] h-[18px] w-[18px]" viewBox="0 0 18 18" fill="none" stroke="#555" stroke-width="1.200"><path d="M1 5V2a1 1 0 0 1 1-1h3M13 1h3a1 1 0 0 1 1 1v3M17 13v3a1 1 0 0 1-1 1h-3M5 17H2a1 1 0 0 1-1-1v-3"/><rect x="5.500" y="5" width="7" height="8" rx="1"/></svg>
      <span class="ml-[29px] w-[31px] whitespace-nowrap text-[15.500px] text-[#4d5b70]">70%</span>
      <svg class="ml-[18px] h-[5px] w-[8px]" viewBox="0 0 8 5" fill="none" stroke="#444" stroke-width="1.400"><path d="M.5.500L4 4 7.500.500"/></svg>
      <span class="ml-[23px] h-[2px] w-[14px] bg-[#333]"></span>
      <div class="relative ml-[18px] h-[2px] w-[131px] bg-[#bdbdbd]">
        <div class="h-full w-[47px] bg-[#1f5fcf]"></div>
        <span class="absolute left-[42px] -top-[4px] flex h-[10px] w-[10px] items-center justify-center rounded-full bg-white"><span class="h-[5px] w-[5px] rounded-full bg-[#bbb]"></span></span>
      </div>
      <svg class="ml-[18px] h-[14px] w-[14px]" viewBox="0 0 14 14" stroke="#333" stroke-width="1.800"><path d="M7 0v14M0 7h14"/></svg>
      <svg class="ml-[26px] h-[16px] w-[16px]" viewBox="0 0 16 16" fill="none" stroke="#555" stroke-width="1.200"><path d="M1 5V1h4M11 1h4v4M15 11v4h-4M5 15H1v-4M10 6l4-4M6 10l-4 4"/></svg>
    </div>
  </div>
</div>
</body>
</html>
